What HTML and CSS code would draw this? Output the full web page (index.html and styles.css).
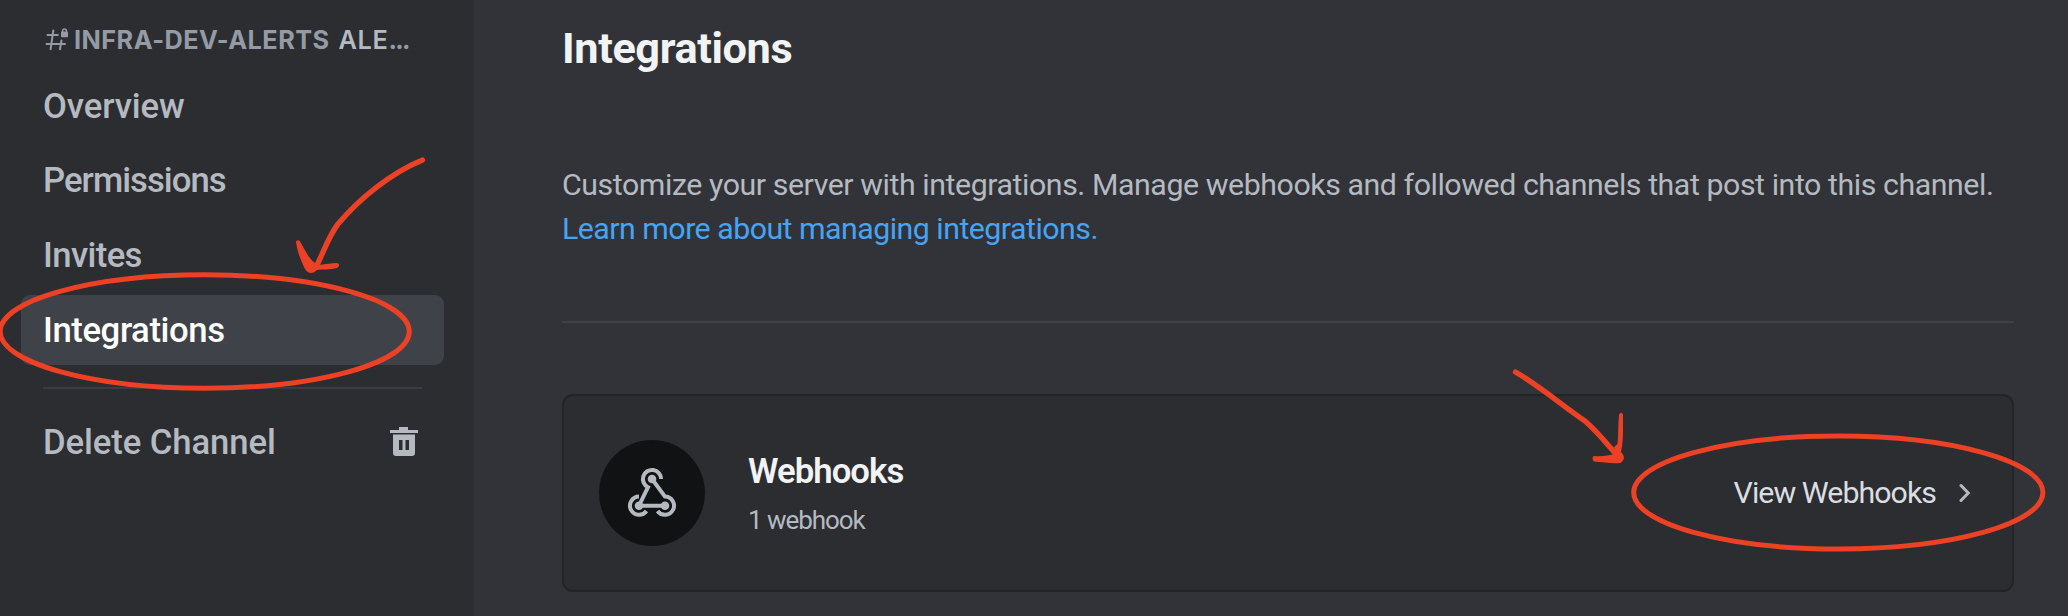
FILE: index.html
```
<!DOCTYPE html>
<html lang="en">
<head>
<meta charset="utf-8">
<title>Channel settings</title>
<link rel="stylesheet" href="styles.css">
</head>
<body>
<div class="app">
  <nav class="sidebar">
    <div class="channel">
      <svg class="hash" viewBox="0 0 24 24" width="24" height="24" fill="none" stroke="#949ba4" stroke-width="2" stroke-linecap="round">
        <path d="M3.500 7H13.800M2.500 16H21M9.300 2.500L6.600 21.200M17.500 12.500L16 21.200"/>
        <path d="M18.600 4.500V2.800a1.900 1.900 0 0 1 3.800 0V4.500" stroke-width="1.500"/>
        <rect x="17" y="3.600" width="7" height="5.600" rx=".8" fill="#949ba4" stroke="none"/>
      </svg>
      <span class="channel-name">INFRA-DEV-ALERTS</span><span class="channel-category">ALE</span><span class="channel-dots">...</span>
    </div>
    <div class="menu">
      <div class="item item-overview">Overview</div>
      <div class="item item-permissions">Permissions</div>
      <div class="item item-invites">Invites</div>
      <div class="item item-selected">Integrations</div>
    </div>
    <div class="separator"></div>
    <div class="item item-delete">
      <span>Delete Channel</span>
      <svg viewBox="0 0 28 30" width="28" height="30" fill="#b5bac1">
        <path d="M0 3H9V0H18V3H28V6H0Z"/>
        <path fill-rule="evenodd" d="M3 7.500H25V26Q25 29 22 29H6Q3 29 3 26ZM9 13V23H12.500V13ZM15.500 13V23H19V13Z"/>
      </svg>
    </div>
  </nav>
  <main class="content">
    <h1 class="title">Integrations</h1>
    <p class="description">Customize your server with integrations. Manage webhooks and followed channels that post into this channel.<br><a class="link">Learn more about managing integrations.</a></p>
    <div class="rule"></div>
    <section class="card">
      <div class="avatar">
        <svg viewBox="599 440 106 106" width="106" height="106" fill="none" stroke="#b5bac1" stroke-width="4">
          <path d="M661.100 479A9.100 9.100 0 1 0 648 487.200L639 505.700H665"/>
          <path d="M652 479L665 496.600A9.100 9.100 0 1 1 657.500 511"/>
          <path d="M639 496.600A9.100 9.100 0 1 0 646.500 511"/>
          <g fill="#b5bac1" stroke="none"><circle cx="652" cy="479" r="4.300"/><circle cx="639" cy="505.700" r="4.300"/><circle cx="665" cy="505.700" r="4.300"/></g>
        </svg>
      </div>
      <div class="card-text">
        <div class="card-title">Webhooks</div>
        <div class="card-count">1 webhook</div>
      </div>
      <div class="card-action">
        <span>View Webhooks</span>
        <svg viewBox="0 0 12 20" width="12" height="20" fill="none" stroke="#b5bac1" stroke-width="3" stroke-linecap="round"><path d="M2 2.500L9.300 10L2 17.500"/></svg>
      </div>
    </section>
  </main>
  <svg class="annotations" viewBox="0 0 2068 616" width="2068" height="616" fill="none" stroke="#ec4125" stroke-width="5">
    <ellipse cx="204.700" cy="331.500" rx="204.600" ry="56.700"/>
    <ellipse cx="1838.300" cy="492.500" rx="204.600" ry="56.500"/>
    <g stroke-width="5.400" stroke-linecap="round" stroke-linejoin="round">
      <path d="M422.500 160C391 173 360 198 338 224C328 237 323 254 316 267"/>
      <path d="M1515.500 372C1541 387 1563 406 1585 421C1600 434 1609 447 1619 457"/>
    </g>
    <g fill="#ec4125" stroke="none">
      <path d="M296 241.500C298 239 300 241 301 243C305 250 309 259 315 263L319 265C326 264 332 263 336 263C340 263 340 266 337 268C330 270 323 269 317 270C313 274 308 274 305 269C301 261 297 251 296 241.500Z"/>
      <path d="M1619 415C1620 412 1622.500 412 1623 415C1623 429 1623.500 442 1621 452C1625 456 1625 460 1620.500 463C1612 464 1603 462 1594 461.500C1592 460 1592 457 1594 456C1603 457 1611 455 1617 453L1614 447L1617.500 444C1618.500 434 1618 425 1619 415Z"/>
    </g>
  </svg>
</div>
</body>
</html>
```
FILE: styles.css
```
* { box-sizing: border-box; }
body { margin: 0; background: #313338; font-family: Roboto, "Open Sans", sans-serif; }
.app { position: relative; display: flex; width: 2068px; height: 616px; overflow: hidden; }

.sidebar { width: 474px; height: 616px; padding: 18px 30px 0 21px; background: #2b2d31; flex: none; }
.channel { display: flex; align-items: center; height: 44px; margin-bottom: 9px; padding-left: 23px; font: 700 25.3px/44px Inter, sans-serif; letter-spacing: .45px; white-space: nowrap; color: #949ba4; }
.hash { flex: none; margin-right: 6px; overflow: visible; }
.channel-category { margin-left: 9px; font-weight: 600; color: #b5bac1; letter-spacing: .6px; }
.channel-dots { letter-spacing: -1.6px; }

.menu { display: flex; flex-direction: column; gap: 4.700px; }
.item { display: flex; align-items: center; height: 70px; padding: 0 22px; border-radius: 9px; font-size: 34.700px; font-weight: 500; letter-spacing: -.1px; line-height: 70px; color: #b5bac1; white-space: nowrap; }
.item-overview { line-height: 71px; }
.item-permissions { line-height: 69px; letter-spacing: -.95px; }
.item-invites { letter-spacing: -.62px; }
.item-selected { background: #404249; color: #fff; letter-spacing: -.41px; }
.separator { height: 2px; margin: 22px 22px 18px 22px; background: #3b3d44; }
.item-delete { justify-content: space-between; width: 423px; padding-right: 26px; letter-spacing: -.1px; }

.content { flex: 1; padding: 23px 54px 0 88px; }
.title { margin: 0 0 87.600px 0; font-size: 43.300px; line-height: 52px; font-weight: 700; letter-spacing: -.4px; color: #f2f3f5; }
.description { margin: 0; font-size: 30.300px; line-height: 44px; letter-spacing: -.43px; color: #b5bac1; white-space: nowrap; }
.link { color: #46a4f6; letter-spacing: -.51px; }
.rule { height: 2px; margin: 70.400px 0 71px; background: #3f4147; }
.card { display: flex; align-items: center; height: 198px; padding: 0 41px 0 35px; border: 2px solid #232428; border-radius: 11px; background: #2b2d31; }
.avatar { width: 106px; height: 106px; border-radius: 50%; background: #111214; }
.avatar svg { display: block; }
.card-text { margin: 3px 0 0 43px; }
.card-title { font-size: 34.700px; font-weight: 600; line-height: 44px; letter-spacing: -.95px; color: #f2f3f5; }
.card-count { margin-top: 7px; font-size: 26px; line-height: 40px; letter-spacing: -1.050px; color: #b5bac1; }
.card-action { display: flex; align-items: center; gap: 23px; margin-left: auto; font-size: 30.300px; letter-spacing: -.95px; color: #dbdee1; }

.annotations { position: absolute; left: 0; top: 0; }
```
